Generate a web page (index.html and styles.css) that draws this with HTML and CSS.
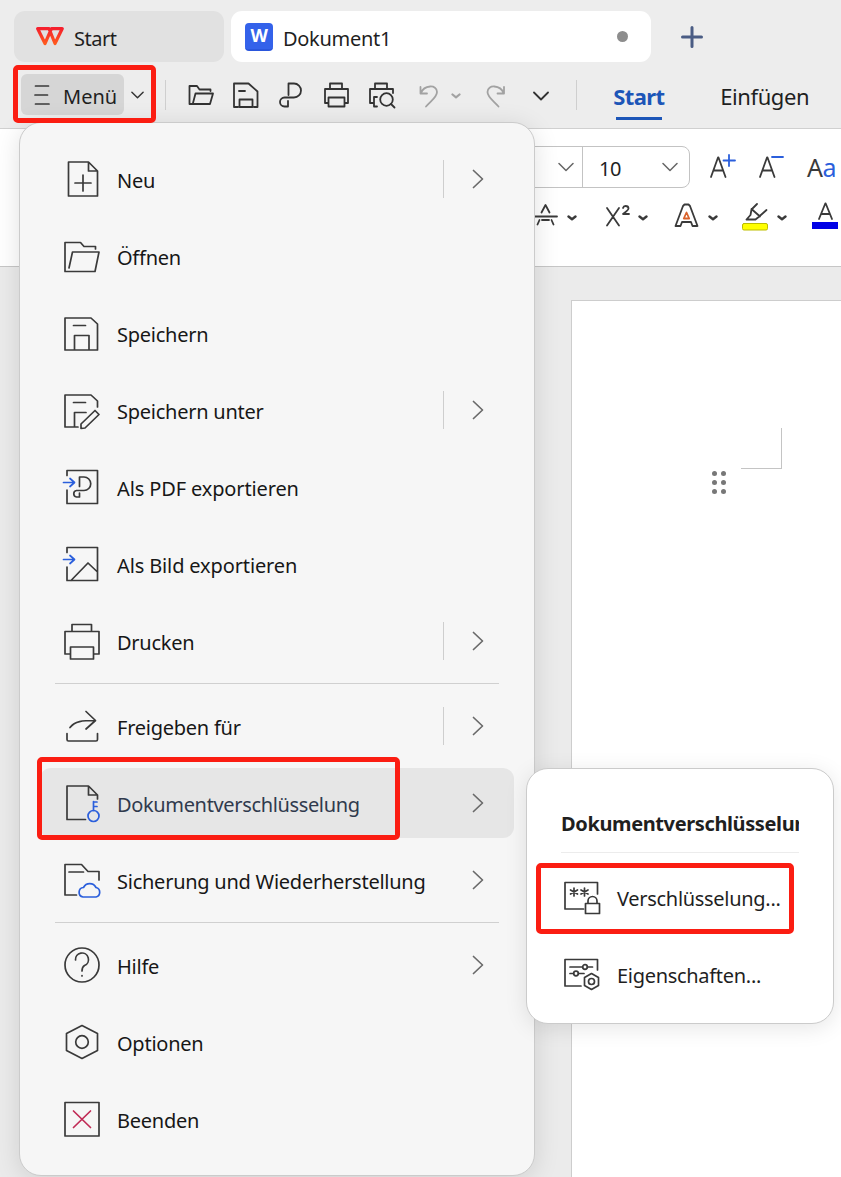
FILE: index.html
```html
<!DOCTYPE html>
<html lang="de">
<head>
<meta charset="utf-8">
<title>Dokument1</title>
<link rel="stylesheet" href="styles.css">
</head>
<body>
<svg width="0" height="0" class="defs">
  <defs>
    <symbol id="right" viewBox="0 0 12 20"><path d="M1.5 1.5L10.5 10L1.5 18.5"/></symbol>
    <symbol id="down" viewBox="0 0 16 10"><path d="M1 1.5L8 8.5L15 1.5"/></symbol>
    <symbol id="caret" viewBox="0 0 10 6"><path d="M1.5 1.5L5 4.300L8.500 1.500"/></symbol>
  </defs>
</svg>
<div class="app">
  <header class="tabs">
    <div class="tab tab-home">
      <svg class="logo" width="28" height="19" viewBox="0 0 28 19"><defs><linearGradient id="wps" x1="0" y1="0" x2="0" y2="1"><stop offset="0" stop-color="#f5202d"/><stop offset="1" stop-color="#ff5a1f"/></linearGradient></defs><path d="M9 16.500L1.700 1.700H13L19 16.500L26.200 1.700H15.500Z" fill="none" stroke="url(#wps)" stroke-width="3.200" stroke-linejoin="round"/></svg>
      <span>Start</span>
    </div>
    <div class="tab tab-doc">
      <span class="word">W</span>
      <span class="doc-name">Dokument1</span>
      <i class="dirty"></i>
    </div>
    <svg class="plus" width="22" height="22" viewBox="0 0 22 22"><path d="M11 1.5V20.5M1.5 11H20.5"/></svg>
  </header>

  <nav class="toolbar">
    <div class="menu-btn"><svg class="burger" width="16" height="20" viewBox="0 0 16 20"><path d="M1.500 1H14.500M1 10H13.500M1.500 19H15"/></svg><span>Menü</span></div>
    <svg class="menu-caret ico" width="13" height="8"><use href="#down"/></svg>
    <i class="vline first"></i>
    <div class="quick ico">
      <svg viewBox="0 0 26 26"><path d="M5 21L7.500 11.500H25L22 22H1.500V4H9L11.500 7.500H22.500V9"/></svg>
      <svg viewBox="0 0 26 26"><path d="M5 25H1V1.500H15.500L24.500 9.500V25H21M6 9H12M6.500 25V17.500H19.500V25Z"/></svg>
      <svg viewBox="0 0 26 26"><path d="M9.500 13V1.500H15A6.800 6.800 0 0 1 15 15.500H5.500A4.500 4.500 0 0 0 5.500 24.500H9V19"/></svg>
      <svg viewBox="0 0 26 26"><path d="M6 7V1.500H18V7M4 21H1V7H24V21H20.500M4.500 15.500H20.500V24.500H4.500Z"/></svg>
      <svg viewBox="0 0 26 26"><path d="M6 7V1.500H18V7M4 21H1V7H24V11M8 15H5V24.500H8"/><circle cx="17.500" cy="17.500" r="6.300"/><path d="M22 22L25.500 25.500"/></svg>
    </div>
    <svg class="undo faded" width="20" height="24" viewBox="0 0 20 24"><path d="M2.500 3V9.500H9M3 9C6 1 19 0 19 8C19 13 14 16 8 22.500"/></svg>
    <svg class="undo-caret faded bold" width="10" height="6"><use href="#caret"/></svg>
    <svg class="redo faded" width="20" height="24" viewBox="0 0 20 24"><path d="M18 3V9.500H11.500M17.500 9C14.500 1 1.500 0 1.500 8C1.500 13 6.500 16 12.500 22.500"/></svg>
    <svg class="more ico" width="16" height="10"><use href="#down"/></svg>
    <i class="vline second"></i>
    <span class="rtab active">Start</span>
    <span class="rtab insert">Einfügen</span>
  </nav>

  <section class="ribbon">
    <div class="row fonts">
      <div class="name-box"><svg width="16" height="10"><use href="#down"/></svg></div>
      <div class="size-box"><span>10</span><svg width="16" height="10"><use href="#down"/></svg></div>
      <svg class="grow rb" width="28" height="28" viewBox="0 0 28 28"><path d="M2 25L9 5.500H9.500L16.500 25M4.500 18.500H14"/><path class="blue" d="M20 3V14M14.500 8.500H26"/></svg>
      <svg class="shrink rb" width="28" height="28" viewBox="0 0 28 28"><path d="M2 25L9 5.500H9.500L16.500 25M4.500 18.500H14"/><path class="blue" d="M14 5H25"/></svg>
      <span class="case">A<b>a</b></span>
    </div>
    <div class="row styles">
      <svg class="rb" width="24" height="24" viewBox="0 0 24 24"><path d="M7.500 9.500L11.500 2L15.500 9.500M0 13.500H23M5.500 17L3.500 21.500M17.500 17L19.500 21.500M8 17H15"/></svg>
      <svg class="car c1 rb" width="10" height="6"><use href="#caret"/></svg>
      <svg class="sup rb" width="25" height="24" viewBox="0 0 25 24"><path d="M2 5L14 22.500M14 5L2 22.500M18 5Q18.500 3 20.500 3Q23.500 3 23.500 5.500Q23.500 7 18 11H24"/></svg>
      <svg class="car c2 rb" width="10" height="6"><use href="#caret"/></svg>
      <svg class="fx rb" width="26" height="24" viewBox="0 0 26 24"><path d="M1.500 23L9 3L10.500 1.500H14.500L16 3L23.500 23H18.500L17 19H8L6.500 23Z"/><path class="orange" d="M12.500 9.500L9.800 15.500H15.200Z"/></svg>
      <svg class="car c3 rb" width="10" height="6"><use href="#caret"/></svg>
      <svg class="marker rb" width="28" height="28" viewBox="0 0 28 28"><path d="M15 1L9.500 6.500L8.500 12L4.500 16.500H13.500L16 14.500L24.500 7M9.500 6L18 13.500"/><rect x="0.500" y="20.500" width="25" height="6.500" rx="1.500"/></svg>
      <svg class="car c4 rb" width="10" height="6"><use href="#caret"/></svg>
      <svg class="color rb" width="28" height="28" viewBox="0 0 28 28"><path d="M8 17L14.300 1.500H14.700L21 17M10.500 12H18.500"/><rect x="1" y="20" width="26" height="7"/></svg>
    </div>
  </section>

  <main class="desk">
    <div class="paper">
      <div class="grip"><i></i><i></i><i></i><i></i><i></i><i></i></div>
      <i class="corner"></i>
    </div>
  </main>

  <div class="menu">
    <div class="item"><svg class="mi" viewBox="0 0 37 37"><path d="M4.500 1H24.500L33.500 10V35H4.500ZM24.500 1V10H33.500M19 14V30M11 22H27"/></svg><span>Neu</span><i class="split"></i><svg class="chev"><use href="#right"/></svg></div>
    <div class="item"><svg class="mi" viewBox="0 0 37 37"><path d="M5 30L8.500 14H35L31 33.500H1V4.500H16.500L20 8.500H31.500V11"/></svg><span>Öffnen</span></div>
    <div class="item"><svg class="mi" viewBox="0 0 37 37"><path d="M1 3H27L33.500 9V35H1ZM9.500 10.500H21.500M10.500 35V20.500H25V35"/></svg><span>Speichern</span></div>
    <div class="item"><svg class="mi" viewBox="0 0 37 37"><path d="M14 35H1V3H27L33.500 9V15M9.500 10.500H21.500M10.500 35V20.500H22M17 36.500L17 32L31 18.500L35 22.500L21 36Z"/></svg><span>Speichern unter</span><i class="split"></i><svg class="chev"><use href="#right"/></svg></div>
    <div class="item"><svg class="mi" viewBox="0 0 37 37"><path d="M3 6.500V1.500H33.500V34.500H3V21M15.500 17.500V8H20A6.700 6.700 0 0 1 20 21.500H12.500A3.300 3.300 0 0 0 12.500 28H15.500V24"/><path class="blue" d="M-0.500 13.500H10M6 9.500L10.500 13.500L6 17.500"/></svg><span class="wide">Als PDF exportieren</span></div>
    <div class="item"><svg class="mi" viewBox="0 0 37 37"><path d="M3 6.500V1.500H33.500V34.500H3V21M7 34.500L24 17L33.500 26"/><path class="blue" d="M-0.500 13.500H10M6 9.500L10.500 13.500L6 17.500"/></svg><span class="wide">Als Bild exportieren</span></div>
    <div class="item"><svg class="mi" viewBox="0 0 37 37"><path d="M8 8.500V1.500H27.500V8.500M6.500 31H1V8.500H35V31H29.500M6.500 24H29.500V36H6.500Z"/></svg><span>Drucken</span><i class="split"></i><svg class="chev"><use href="#right"/></svg></div>
    <hr>
    <div class="item"><svg class="mi" viewBox="0 0 37 37"><path d="M3 25.500V31.500Q3 33 4.500 33H32Q33.500 33 33.500 31.500V25.500M22 3.500L31.500 12.500L22 21M6 19.500C11 13 18 12.500 31.500 12.500"/></svg><span>Freigeben für</span><i class="split"></i><svg class="chev"><use href="#right"/></svg></div>
    <div class="item hover"><svg class="mi" viewBox="0 0 37 37"><path d="M21.500 34.500H3V1H24.500L33.500 10V14M24.500 1V10H33.500"/><g class="blue"><circle cx="29.500" cy="31" r="5.500"/><path d="M29.500 25.500V16.500M29.500 17H33M29.500 21.500H33"/></g></svg><span>Dokumentverschlüsselung</span><svg class="chev"><use href="#right"/></svg></div>
    <div class="item"><svg class="mi" viewBox="0 0 37 37"><path d="M12.500 33H1V2.500H17.500L24 9.500H35V18M5 10H19.500"/><path class="blue" d="M19 35A4.800 4.800 0 0 1 19.500 25.500A7 7 0 0 1 32 25.500A4.900 4.900 0 0 1 32 35Z"/></svg><span>Sicherung und Wiederherstellung</span><svg class="chev"><use href="#right"/></svg></div>
    <hr>
    <div class="item"><svg class="mi" viewBox="0 0 37 37"><circle cx="18" cy="18" r="17"/><path d="M11.500 13A6.500 6.500 0 1 1 20.500 18.500Q18 20 18 24M18 28.500V29"/></svg><span>Hilfe</span><svg class="chev"><use href="#right"/></svg></div>
    <div class="item"><svg class="mi" viewBox="0 0 37 37"><path d="M18 1.500L33.500 9.500V26.500L18 34.500L2.500 26.500V9.500Z"/><circle cx="18" cy="18" r="6.300"/></svg><span>Optionen</span></div>
    <div class="item"><svg class="mi" viewBox="0 0 37 37"><path d="M1 1.500H35V35H1Z"/><path class="red" d="M9.500 10L26.500 26.500M26.500 10L9.500 26.500"/></svg><span>Beenden</span></div>
  </div>

  <div class="submenu">
    <h2>Dokumentverschlüsselung</h2>
    <div class="sub"><svg class="mi" viewBox="0 0 37 37"><path d="M19.500 29H1V2.500H33.500V14M21.500 23.500H35.500V33.500H21.500ZM24 23.500V21A4.500 4.500 0 0 1 33 21V23.500"/><path d="M10 8V16M6.500 10L13.500 14M13.500 10L6.500 14M20.500 8V16M17 10L24 14M24 10L17 14"/></svg><span>Verschlüsselung...</span></div>
    <div class="sub"><svg class="mi" viewBox="0 0 37 37"><path d="M17 29H1V2.500H33.500V13M6 10H18.500M23.500 10H28.500M6 16.500H9.500M14.500 16.500H20"/><circle cx="21" cy="10" r="2.300"/><circle cx="12" cy="16.500" r="2.300"/><path d="M27.500 16.500L34.500 20.500V28.500L27.500 32.500L20.500 28.500V20.500Z"/><circle cx="27.500" cy="24.500" r="3"/></svg><span>Eigenschaften...</span></div>
  </div>

  <i class="mark mark-menu"></i>
  <i class="mark mark-item"></i>
  <i class="mark mark-sub"></i>
</div>
</body>
</html>
```
FILE: styles.css
```css
* { box-sizing: border-box; }
body { margin: 0; font-family: "Noto Sans", sans-serif; font-size: 20px; color: #1f1f1f; }
.app { position: relative; width: 841px; height: 1177px; overflow: hidden; background: #ededed; display: flex; flex-direction: column; }
.defs { position: absolute; }
svg { flex: none; fill: none; stroke: #3a3a3a; stroke-width: 1.7; stroke-linecap: round; stroke-linejoin: round; }
span { white-space: nowrap; }

.tabs { display: flex; height: 62px; padding: 11px 0 0 14px; gap: 7px; }
.tab { height: 51px; border-radius: 11px; display: flex; align-items: center; padding-top: 3px; letter-spacing: -.3px; }
.tab-home { width: 210px; background: #e1e1e1; padding-left: 22px; gap: 10px; }
.tab-home span { letter-spacing: -.5px; }
.logo { margin-top: -4px; }
.tab-doc { width: 420px; background: #fff; padding-left: 14px; }
.word { width: 28px; height: 28px; margin-top: -3px; border-radius: 4px; background: #3462ea; color: #fff; font-size: 18px; font-weight: 700; line-height: 24px; text-align: center; border-bottom: 2px solid #2a56dc; }
.doc-name { margin-left: 10px; }
.dirty { width: 11px; height: 11px; border-radius: 50%; background: #8d8d8d; margin: -3px 23px 0 auto; }
.plus { margin: 15px 0 0 23px; stroke: #4a5c84; stroke-width: 3; }

.toolbar { height: 67px; display: flex; align-items: flex-start; padding-left: 21px; border-bottom: 1px solid #d0d0d0; }
.toolbar .ico, .ico svg { stroke: #333; stroke-width: 1.8; }
.menu-btn { width: 103px; height: 41px; margin-top: 12px; border-radius: 6px; background: #d6d6d6; display: flex; align-items: center; padding: 4px 0 0 13px; gap: 13px; letter-spacing: 0; }
.burger { margin-top: -4px; }
.menu-caret { margin: 29px 0 0 7px; }
.vline { width: 1px; height: 30px; margin-top: 18px; background: #cfcfcf; }
.first { margin-left: 21px; }
.quick { display: flex; gap: 19.3px; margin: 20px 0 0 22px; }
.quick svg { width: 26px; height: 26px; overflow: visible; }
.faded { stroke: #a2a2a2; stroke-width: 1.8; }
.bold { stroke-width: 2.2; }
.undo { margin: 22px 0 0 23px; }
.undo-caret { margin: 31px 0 0 13px; }
.redo { margin: 22px 0 0 25px; }
.more { margin: 29px 0 0 27px; }
.second { margin-left: 27px; }
.rtab { font-size: 22px; line-height: 30px; margin-top: 19px; }
.active { margin-left: 36px; width: 52px; color: #1d56b8; font-weight: 700; letter-spacing: -.6px; padding-bottom: 6px; background: linear-gradient(#1d56b8, #1d56b8) 3px 100% / 46px 3px no-repeat; height: 39px; }
.insert { margin-left: 55px; letter-spacing: -.4px; }

.ribbon { height: 138px; background: #fff; border-bottom: 1px solid #c6c6c6; padding: 17px 0 0 520px; }
.row { display: flex; align-items: flex-start; }
.name-box, .size-box { height: 42px; border: 1px solid #c3c3c3; display: flex; align-items: center; }
.name-box { width: 63px; padding-left: 37px; }
.size-box { width: 108px; margin-left: -1px; border-radius: 0 8px 8px 0; padding-left: 16px; }
.size-box span { width: 63px; padding-top: 3px; letter-spacing: -.5px; }
.size-box svg, .name-box svg { stroke: #666; stroke-width: 1.5; }
.rb { stroke: #3a3a3a; stroke-width: 1.8; overflow: visible; }
.blue { stroke: #2b5fdc; }
.red { stroke: #c02a55; }
.orange { stroke: #d9622b; }
.grow { margin: 6px 0 0 19px; }
.shrink { margin: 6px 0 0 21px; }
.case { margin: 2px 0 0 21px; font-size: 25px; line-height: 38px; letter-spacing: -.5px; color: #3a3a3a; }
.case b { font-weight: 400; color: #2b5fdc; }
.styles { padding: 15px 0 0 14px; }
.fonts { height: 42px; }
.car { margin-top: 12px; stroke-width: 2.4; }
.c1 { margin-left: 9px; }
.sup { margin-left: 28px; }
.c2 { margin-left: 8px; }
.fx { margin-left: 26px; }
.c3 { margin-left: 8px; }
.marker { margin-left: 24px; }
.marker rect { fill: #ff0; stroke: #bdbd00; stroke-width: 1; }
.c4 { margin-left: 7px; }
.color { margin: -1px 0 0 24px; }
.color rect { fill: #0000e6; stroke: none; }

.desk { flex: 1; padding: 33px 0 0 571px; background: #ebebeb; }
.paper { height: 100%; background: #fff; border: 1px solid #cdcdcd; border-width: 1px 0 0 1px; display: flex; align-items: flex-start; padding-left: 140px; }
.grip { display: grid; grid-template-columns: 5px 5px; gap: 4px; margin: 170px 15px 0 0; }
.grip i { width: 5px; height: 5px; border-radius: 50%; background: #777; }
.corner { width: 41px; height: 41px; margin-top: 127px; border: 1px solid #c4c4c4; border-width: 0 1px 1px 0; }

.menu { position: absolute; left: 19px; top: 122px; width: 516px; height: 1054px; padding: 22px 20px; border: 1px solid #cbcbcb; border-radius: 22px; background: #f6f6f6; box-shadow: 0 4px 26px rgba(0,0,0,.12); display: flex; flex-direction: column; gap: 8px; }
.item { height: 69px; flex: none; display: flex; align-items: center; padding: 0 30px 0 24px; border-radius: 11px; letter-spacing: -.25px; color: #171717; }
.item span, .sub span { padding-top: 2px; }
.item .wide { letter-spacing: -.13px; }
.hover { background: #e6e6e6; color: #303a4d; letter-spacing: -.35px; margin-top: -1px; height: 70px; }
.hover span { padding-top: 3px; }
.mi { width: 37px; height: 37px; margin-right: 16px; overflow: visible; }
.split { width: 1px; height: 38px; margin: -1px 28px 0 auto; background: #cecece; }
.chev { width: 12px; height: 20px; margin: -2px 0 0 auto; stroke: #6a6a6a; stroke-width: 1.7; }
.hover .chev { margin-top: 0; }
.split + .chev { margin-left: 0; }
hr { width: 444px; height: 0; flex: none; margin: -1px 0 0 15px; border: 0; border-top: 1px solid #d0d0d0; }

.submenu { position: absolute; left: 526px; top: 768px; width: 308px; height: 256px; border: 1px solid #cbcbcb; border-radius: 22px; background: #fff; box-shadow: 0 4px 22px rgba(0,0,0,.1); padding: 35px 34px 0; }
h2 { margin: 0 0 11px; width: 238px; height: 49px; overflow: hidden; white-space: nowrap; font-size: 20px; line-height: 40px; letter-spacing: -.38px; border-bottom: 1px solid #ececec; }
.sub { height: 69px; margin-bottom: 8px; padding-left: 3px; display: flex; align-items: center; letter-spacing: -.3px; }
.sub span { padding: 0; }

.mark { position: absolute; border: 5px solid #fb1d12; border-radius: 5px; }
.mark-menu { left: 13px; top: 65px; width: 143px; height: 58px; }
.mark-item { left: 37px; top: 757px; width: 363px; height: 83px; }
.mark-sub { left: 536px; top: 863px; width: 258px; height: 71px; }
```
